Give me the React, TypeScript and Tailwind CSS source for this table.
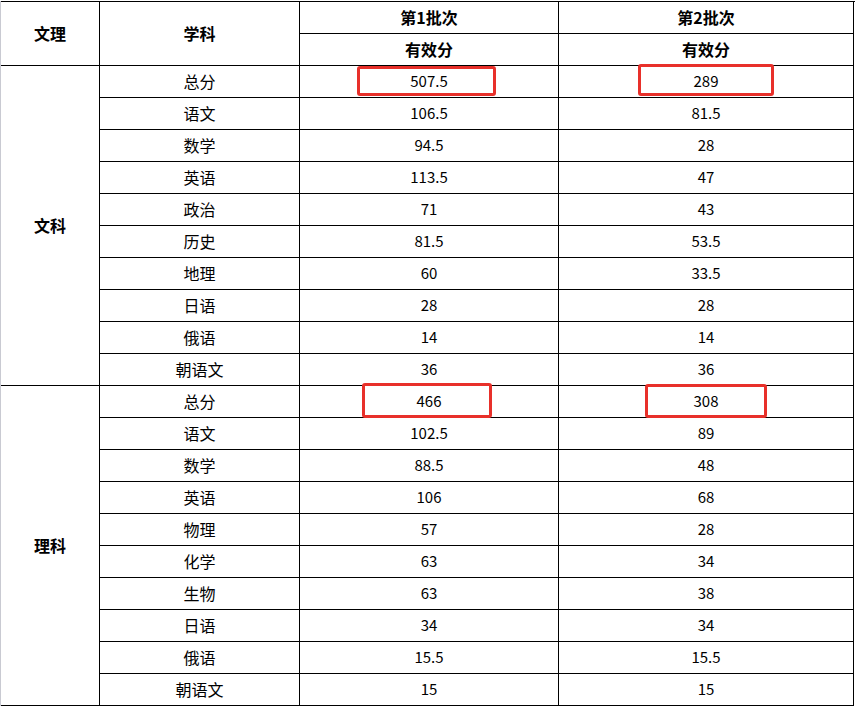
import React from 'react';

const wenke: [string, string, string][] = [
  ['总分', '507.5', '289'],
  ['语文', '106.5', '81.5'],
  ['数学', '94.5', '28'],
  ['英语', '113.5', '47'],
  ['政治', '71', '43'],
  ['历史', '81.5', '53.5'],
  ['地理', '60', '33.5'],
  ['日语', '28', '28'],
  ['俄语', '14', '14'],
  ['朝语文', '36', '36'],
];

const like: [string, string, string][] = [
  ['总分', '466', '308'],
  ['语文', '102.5', '89'],
  ['数学', '88.5', '48'],
  ['英语', '106', '68'],
  ['物理', '57', '28'],
  ['化学', '63', '34'],
  ['生物', '63', '38'],
  ['日语', '34', '34'],
  ['俄语', '15.5', '15.5'],
  ['朝语文', '15', '15'],
];

const cell = 'flex items-center justify-center border-r border-b border-black';
const zh = 'text-[16px] pb-[2px]';

function Rows({ rows }: { rows: [string, string, string][] }) {
  return (
    <>
      {rows.map(([subject, a, b]) => (
        <React.Fragment key={subject}>
          <div className={`${cell} ${zh}`}>{subject}</div>
          <div className={cell}>{a}</div>
          <div className={cell}>{b}</div>
        </React.Fragment>
      ))}
    </>
  );
}

export default function App() {
  return (
    <div
      className="relative w-[857px] h-[709px] bg-white overflow-hidden text-[15px] text-black"
      style={{ fontFamily: '"Noto Sans CJK SC", "Noto Sans", sans-serif' }}
    >
      <div className="mt-px border-l border-[#c9cad2] w-[855px]">
        <div className="grid grid-cols-[99px_200px_259px_295px] auto-rows-[32px] border-t border-black">
          <div className={`${cell} ${zh} row-span-2 font-bold`}>文理</div>
          <div className={`${cell} ${zh} row-span-2 font-bold`}>学科</div>
          <div className={`${cell} ${zh} font-bold`}>第1批次</div>
          <div className={`${cell} ${zh} font-bold`}>第2批次</div>
          <div className={`${cell} ${zh} font-bold`}>有效分</div>
          <div className={`${cell} ${zh} font-bold`}>有效分</div>

          <div className={`${cell} ${zh} row-span-10 font-bold`}>文科</div>
          <Rows rows={wenke} />
          <div className={`${cell} ${zh} row-span-10 font-bold`}>理科</div>
          <Rows rows={like} />
        </div>
      </div>

      {/* red highlight boxes */}
      <span className="absolute left-[357px] top-[66px] w-[139px] h-[30px] rounded-[3px] border-[3px] border-[#e8302a]" />
      <span className="absolute left-[638px] top-[64px] w-[136px] h-[32px] rounded-[3px] border-[3px] border-[#e8302a]" />
      <span className="absolute left-[362px] top-[383px] w-[130px] h-[35px] rounded-[3px] border-[3px] border-[#e8302a]" />
      <span className="absolute left-[645px] top-[384px] w-[122px] h-[34px] rounded-[3px] border-[3px] border-[#e8302a]" />
    </div>
  );
}
